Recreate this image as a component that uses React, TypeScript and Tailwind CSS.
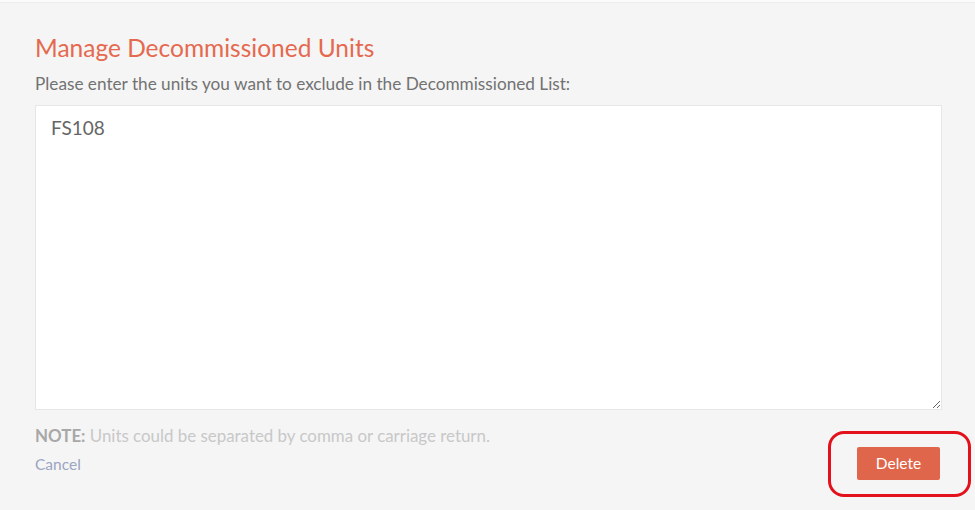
export default function App() {
  return (
    <div className="relative h-[510px] w-[975px] overflow-hidden bg-[#f5f5f5] font-['Lato','Open_Sans',sans-serif]">
      <div className="h-[3px] bg-[#fbfbfc] border-b border-[#ececef]" />
      <div className="px-[35px] pt-[31px]">
        <h2 className="text-[24.5px] leading-[28px] text-[#e5694f]">Manage Decommissioned Units</h2>
        <p className="mt-[11px] text-[17.2px] leading-[22px] text-[#727272]">
          Please enter the units you want to exclude in the Decommissioned List:
        </p>
        <textarea
          defaultValue="FS108"
          className="mt-[10px] block h-[305px] w-[907px] resize-y border border-[#e6e6e6] bg-white px-[15px] pt-[10px] text-[19px] leading-[24px] text-[#666] outline-none"
        />
        <p className="mt-[16px] text-[16.9px] leading-[20px] text-[#c8c8c8]">
          <span className="font-bold text-[#a8a8a8]">NOTE:</span> Units could be separated by comma or carriage return.
        </p>
        <div className="mt-[1px] flex items-center justify-between">
          <a className="text-[15.5px] leading-[20px] text-[#9aa6c2]">Cancel</a>
          <button className="h-[33px] w-[83px] rounded-[2px] bg-[#e0664b] text-[15.5px] text-white">Delete</button>
        </div>
      </div>
      <div className="pointer-events-none absolute left-[828px] top-[431px] h-[66px] w-[143px] rounded-[16px] border-[3px] border-[#e3111b]" />
    </div>
  );
}
